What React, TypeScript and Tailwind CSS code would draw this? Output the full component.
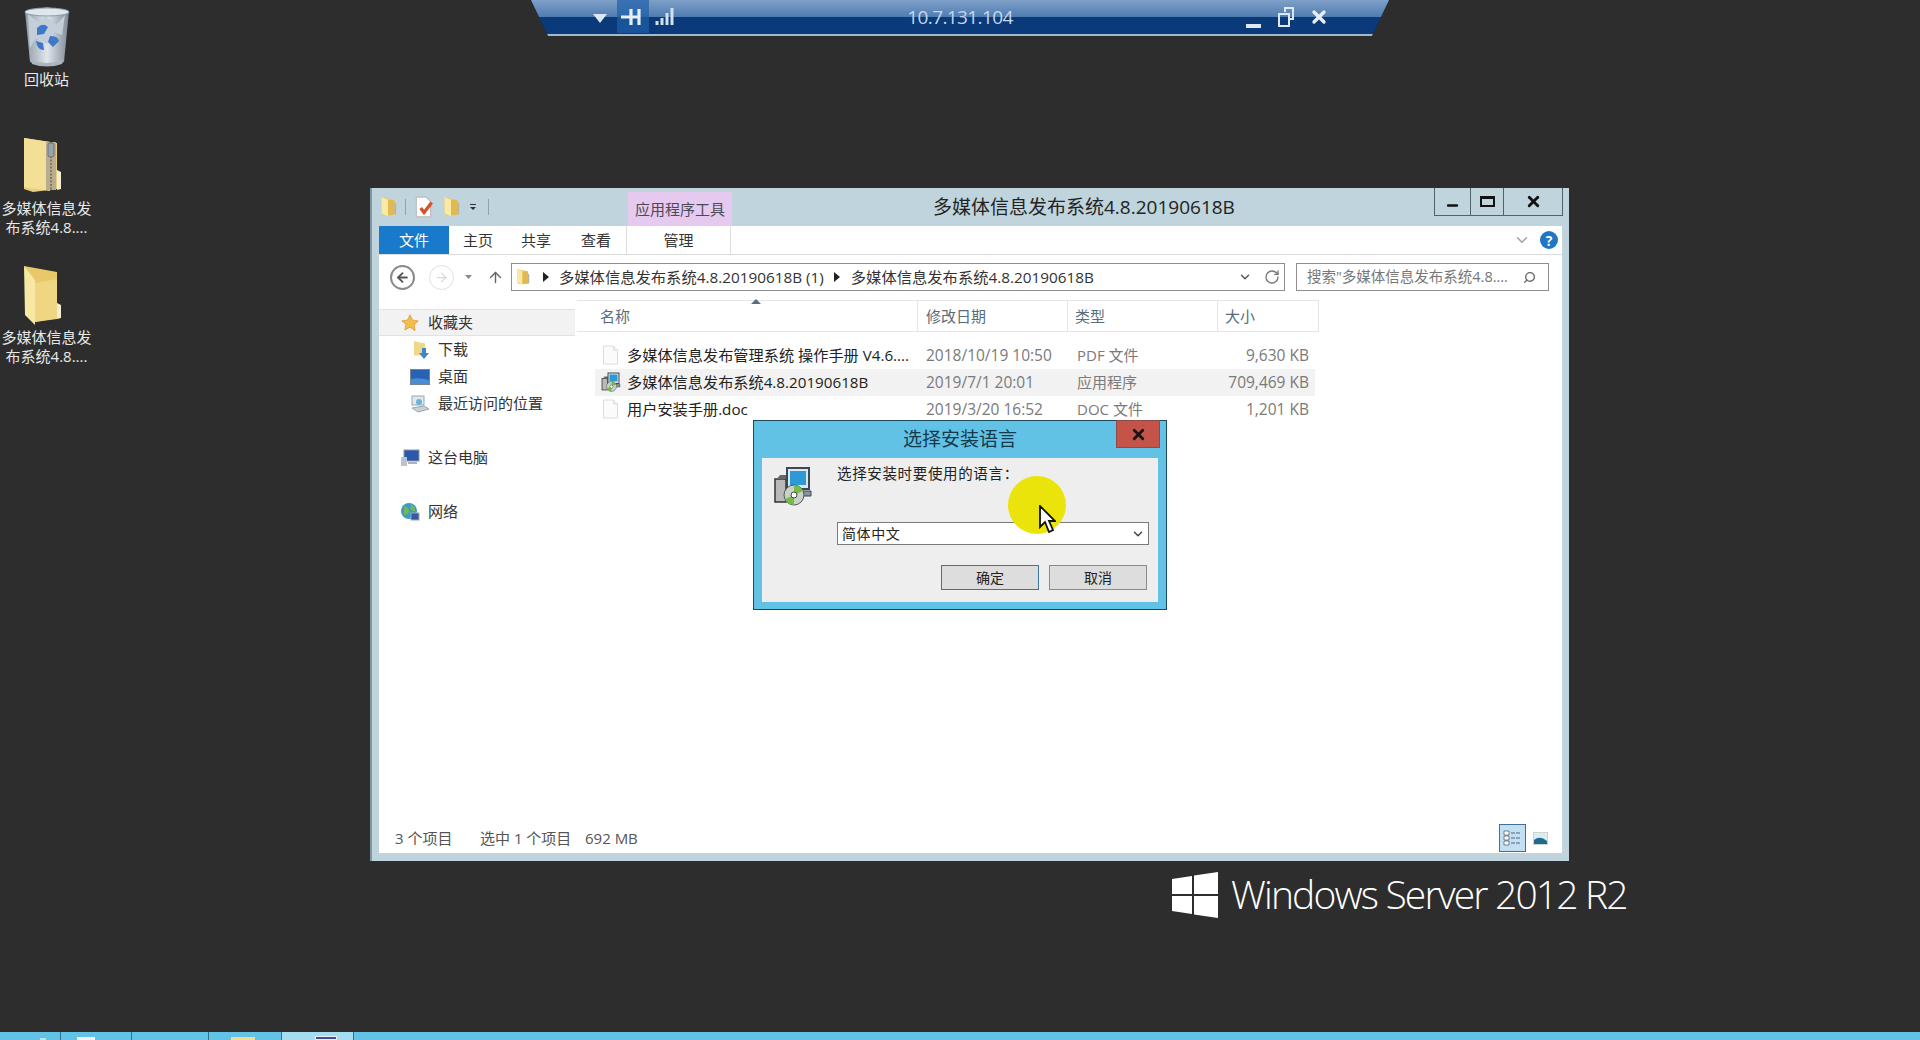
import React from "react";
import { ChevronDown, RotateCw, Search, ArrowLeft, ArrowRight, ArrowUp, X, Minus } from "lucide-react";

const cjk = { fontFamily: '"Open Sans", "Noto Sans CJK SC", sans-serif' };

const files = [
  { name: "多媒体信息发布管理系统 操作手册 V4.6....", date: "2018/10/19 10:50", type: "PDF 文件", size: "9,630 KB", kind: "doc" },
  { name: "多媒体信息发布系统4.8.20190618B", date: "2019/7/1 20:01", type: "应用程序", size: "709,469 KB", kind: "setup", selected: true },
  { name: "用户安装手册.doc", date: "2019/3/20 16:52", type: "DOC 文件", size: "1,201 KB", kind: "doc" },
];

function FolderSmall({ size = 18 }: { size?: number }) {
  return (
    <svg width={size} height={size * 1.2} viewBox="0 0 16 20">
      <path d="M2 1l6 1.5 6 1v14L4 18 2 16z" fill="#eac65f" />
      <path d="M2 1l6 2.5V19L2 16z" fill="#f8e9a5" />
      <path d="M8 4h6v13l-6 1z" fill="#e2b94e" />
      <path d="M14 6l1.5 1v10l-1.5.5z" fill="#b9b39a" />
    </svg>
  );
}

function DocIcon() {
  return (
    <svg width="17" height="20" viewBox="0 0 17 20">
      <path d="M1.5 1h10l4 4v14h-14z" fill="#fbfbfb" stroke="#dcdcdc" />
      <path d="M11.5 1v4h4" fill="#efefef" stroke="#dcdcdc" />
    </svg>
  );
}

function SetupIcon({ size = 20 }: { size?: number }) {
  return (
    <svg width={size} height={size} viewBox="0 0 40 40">
      <rect x="2" y="13" width="11" height="23" fill="#b9b9b9" stroke="#333" strokeWidth="1.5" />
      <path d="M4 13l3-4h8l-2 4z" fill="#666" />
      <rect x="14" y="2" width="22" height="21" fill="#dfe6ec" stroke="#39485a" strokeWidth="2" />
      <rect x="17" y="5" width="16" height="14" fill="#2d9ad6" />
      <path d="M14 25h24v5H24z" fill="#8a949c" stroke="#39485a" />
      <circle cx="21" cy="29" r="10" fill="#c6d3c6" stroke="#555" />
      <path d="M21 19a10 10 0 0 1 9 6l-9 4zM21 39a10 10 0 0 1-9-6l9-4z" fill="#79b84a" />
      <circle cx="21" cy="29" r="3" fill="#fff" stroke="#444" />
    </svg>
  );
}

function DesktopItem({ top, lines, children }: { top: number; lines: string[]; children: React.ReactNode }) {
  return (
    <div className="absolute left-0 w-[93px] flex flex-col items-center text-[15px] leading-[19px] text-[#e8e8e8]" style={{ top, ...cjk }}>
      {children}
      {lines.map((l) => (
        <span key={l} className="whitespace-nowrap">{l}</span>
      ))}
    </div>
  );
}

function RecycleBin() {
  return (
    <svg width="50" height="62" viewBox="0 0 50 62">
      <defs>
        <linearGradient id="bin" x1="0" x2="1">
          <stop offset="0" stopColor="#8f9aa5" />
          <stop offset="0.5" stopColor="#dfe6ee" />
          <stop offset="1" stopColor="#7e8894" />
        </linearGradient>
      </defs>
      <path d="M3 5q22-7 44 0l-5 51q-17 6-34 0z" fill="url(#bin)" />
      <path d="M6 8l10 8 8-6 10 9 9-10-3 20-9-3-6 12-11-6-6 10z" fill="#c3ced9" />
      <ellipse cx="25" cy="6" rx="22" ry="4" fill="#dfe6ec" stroke="#8f99a3" />
      <path d="M15 22q6-6 11-1l-4 7-7 1zM28 30q8 0 9 5l-6 6-5-5zM14 35l7 2 1 7q-7 0-8-9z" fill="#3f78c9" />
      <path d="M9 54q16 6 32 0l-1 4q-15 5-30 0z" fill="#aeb4ba" />
    </svg>
  );
}

function ZipFolder() {
  return (
    <svg width="42" height="56" viewBox="0 0 42 56">
      <path d="M1 1l33 5v46L10 55 1 52z" fill="#e9cf7d" />
      <path d="M1 1l26 4v49L1 50z" fill="#f3df96" />
      <rect x="23" y="5" width="10" height="48" fill="#b9ad90" />
      <path d="M28 5v48" stroke="#80776a" strokeWidth="2" strokeDasharray="2 1.5" />
      <rect x="25" y="6" width="6" height="14" rx="2" fill="#9aa3aa" stroke="#6c7379" />
      <path d="M34 33l4 2v17l-4 1z" fill="#f4eed0" />
    </svg>
  );
}

function OpenFolder() {
  return (
    <svg width="42" height="62" viewBox="0 0 42 62">
      <path d="M1 1l33 6v46L12 57z" fill="#e8c869" />
      <path d="M12 18l22-4v40l-22 3z" fill="#efd683" />
      <path d="M1 1l11 14v45L2 50z" fill="#f7e8a3" />
      <path d="M34 38l4 2v13l-4 1z" fill="#f4eed0" />
    </svg>
  );
}

function TopBar() {
  return (
    <div
      className="absolute top-0 left-[531px] w-[858px] h-[36px] [clip-path:polygon(0_0,100%_0,98%_100%,2%_100%)] flex flex-col"
      style={{ background: "#0a3a7a" }}
    >
      <div className="h-[17px] bg-gradient-to-b from-[#7fa0c9] to-[#4f7cb0]" />
      <div className="flex-1 bg-[#0a3a7a] border-b-2 border-[#a4b8cf]" />
      <div className="absolute left-[86px] top-0 w-[32px] h-[33px] bg-[#1d5fa8]/70" />
      <svg className="absolute left-[62px] top-[14px]" width="14" height="9" viewBox="0 0 14 9"><path d="M0 0h14L7 9z" fill="#dfe8f2" /></svg>
      <svg className="absolute left-[90px] top-[7px]" width="23" height="20" viewBox="0 0 23 20"><path d="M0 10h9M10 2v16M18 2v16M10 10h8" stroke="#e6eef6" strokeWidth="3.2" /></svg>
      <svg className="absolute left-[124px] top-[7px]" width="19" height="19" viewBox="0 0 19 19"><path d="M2 18v-4M7 18v-7M12 18V6M17 18V1" stroke="#d4e0ec" strokeWidth="3" /></svg>
      <span className="absolute left-0 right-0 top-[4px] text-center text-[19px] leading-[26px] tracking-[-0.6px] text-[#c2d7ee]" style={{ fontFamily: '"Open Sans", sans-serif' }}>10.7.131.104</span>
      <div className="absolute left-[715px] top-[24px] w-[15px] h-[4px] bg-[#dfe8f2]" />
      <svg className="absolute left-[746px] top-[6px]" width="18" height="22" viewBox="0 0 18 22"><path d="M8 6V2h8v11h-3" fill="none" stroke="#dfe8f2" strokeWidth="2" /><rect x="2" y="8" width="10" height="12" fill="none" stroke="#dfe8f2" strokeWidth="2" /></svg>
      <X className="absolute left-[778px] top-[7px] text-[#e8eef5]" size={20} strokeWidth={4} />
    </div>
  );
}

function SideRow({ icon, label, pad, active }: { icon: React.ReactNode; label: string; pad: string; active?: boolean }) {
  return (
    <div className={`h-[27px] flex items-center gap-[8px] ${pad} ${active ? "bg-[#f2f2f2] border-y border-[#e2e2e2]" : ""}`}>
      <span className="w-[20px] flex justify-center">{icon}</span>
      <span className="text-[15px] text-[#333]">{label}</span>
    </div>
  );
}

function ExplorerWindow() {
  return (
    <div className="absolute left-[370px] top-[188px] w-[1199px] h-[673px] bg-[#bfd4dc] border-l-2 border-[#7f969f] pl-[7px] pr-[7px] flex flex-col text-[#333]" style={cjk}>
      {/* Title row */}
      <div className="h-[38px] relative flex shrink-0">
        <div className="flex items-center gap-[8px] h-[38px]">
          <FolderSmall />
          <span className="w-px h-[16px] bg-[#8fa3ab]" />
          <svg width="20" height="22" viewBox="0 0 18 20"><path d="M2 1h9l4 4v14H2z" fill="#fff" stroke="#bbb" /><path d="M6 11l3 4 7-9" fill="none" stroke="#d2532c" strokeWidth="3" /></svg>
          <FolderSmall />
          <svg className="ml-[1px]" width="8" height="8" viewBox="0 0 8 8"><path d="M1 1h6v1H1zM1 4h6L4 7z" fill="#333" /></svg>
          <span className="ml-[3px] w-px h-[16px] bg-[#8fa3ab]" />
        </div>
        <div className="ml-[139px] mt-[4px] w-[104px] h-[34px] bg-[#e6c9ef] flex items-center justify-center text-[15px] text-[#4a4a55]">应用程序工具</div>
        <div className="absolute left-[554px] top-0 w-[400px] h-[38px] pr-[110px] text-center leading-[38px] text-[19px] text-[#222] whitespace-nowrap">多媒体信息发布系统4.8.20190618B</div>
        <div className="absolute right-[-1px] top-0 h-[28px] flex border border-t-0 border-[#4f636b]">
          <div className="w-[36px] flex items-center justify-center border-r border-[#4f636b]"><Minus size={15} strokeWidth={4} className="mt-[8px] text-[#111]" /></div>
          <div className="w-[33px] flex items-center justify-center border-r border-[#4f636b]"><span className="w-[15px] h-[11px] border-2 border-t-[3px] border-[#111]" /></div>
          <div className="w-[58px] flex items-center justify-center"><X size={17} strokeWidth={4} className="text-[#111]" /></div>
        </div>
      </div>

      {/* Ribbon tabs */}
      <div className="h-[29px] shrink-0 bg-white border-b border-[#dcdcdc] flex items-stretch text-[15px] relative">
        <div className="w-[70px] bg-[#1979ca] text-white flex items-center justify-center">文件</div>
        <div className="w-[58px] flex items-center justify-center">主页</div>
        <div className="w-[58px] flex items-center justify-center">共享</div>
        <div className="w-[62px] flex items-center justify-center">查看</div>
        <div className="ml-[-1px] w-[105px] flex items-center justify-center border-x border-[#dcdcdc]">管理</div>
        <div className="ml-auto flex items-center gap-[9px] pr-[4px]">
          <ChevronDown size={18} className="text-[#a0a0a0]" />
          <div className="w-[18px] h-[18px] rounded-full bg-[#1f76c4] text-white text-[14px] font-bold flex items-center justify-center">?</div>
        </div>
      </div>

      {/* Address row */}
      <div className="h-[36px] shrink-0 bg-white flex items-start pt-[8px]">
        <div className="w-[132px] h-[28px] flex items-center pl-[11px]">
          <div className="w-[25px] h-[25px] rounded-full border-2 border-[#8a8a8a] flex items-center justify-center"><ArrowLeft size={15} strokeWidth={3} className="text-[#555]" /></div>
          <div className="ml-[14px] w-[25px] h-[25px] rounded-full border border-[#e0e0e0] flex items-center justify-center"><ArrowRight size={15} className="text-[#d8d8d8]" /></div>
          <svg className="ml-[11px]" width="7" height="4" viewBox="0 0 7 4"><path d="M0 0h7L3.5 4z" fill="#8a8a8a" /></svg>
          <ArrowUp size={17} className="ml-[15px] text-[#666]" />
        </div>
        <div className="w-[774px] h-[28px] border border-[#8e8e8e] flex items-center text-[15.3px] text-[#333] whitespace-nowrap">
          <span className="ml-[3px] w-[17px]"><FolderSmall size={15} /></span>
          <svg className="ml-[11px] mr-[10px]" width="6" height="10" viewBox="0 0 6 10"><path d="M0 0l6 5-6 5z" fill="#222" /></svg>
          <span>多媒体信息发布系统4.8.20190618B (1)</span>
          <svg className="ml-[10px] mr-[11px]" width="6" height="10" viewBox="0 0 6 10"><path d="M0 0l6 5-6 5z" fill="#222" /></svg>
          <span>多媒体信息发布系统4.8.20190618B</span>
          <ChevronDown size={14} strokeWidth={2.5} className="ml-auto text-[#555]" />
          <RotateCw size={16} className="ml-[12px] mr-[4px] text-[#777]" />
        </div>
        <div className="ml-[11px] w-[253px] h-[28px] border border-[#8e8e8e] flex items-center pl-[10px] pr-[12px] text-[14.5px] text-[#777] whitespace-nowrap">
          <span>搜索"多媒体信息发布系统4.8....</span>
          <Search size={13} strokeWidth={2.5} className="ml-auto -scale-x-100 text-[#666]" />
        </div>
      </div>

      {/* Main */}
      <div className="flex-1 min-h-0 bg-white flex mb-[8px]">
        <div className="w-[196px] shrink-0 pt-[18px]">
          <SideRow active pad="pl-[21px]" label="收藏夹" icon={<svg width="18" height="18" viewBox="0 0 24 24"><path d="M12 1l3.4 7.2 7.6 1-5.6 5.3 1.5 7.8L12 17.5l-6.9 3.8 1.5-7.8L1 9.2l7.6-1z" fill="#f5bd4b" stroke="#d99a2b" /></svg>} />
          <SideRow pad="pl-[31px]" label="下载" icon={<svg width="17" height="20" viewBox="0 0 17 20"><path d="M2 1l6 1.5 5 1v12H2z" fill="#efd887" /><path d="M10 8h4v5h3l-5 6-5-6h3z" fill="#3f86c9" /></svg>} />
          <SideRow pad="pl-[31px]" label="桌面" icon={<svg width="20" height="16" viewBox="0 0 20 16"><rect width="20" height="16" fill="#78848f" /><rect x="1" y="1" width="18" height="14" fill="#2a62b3" /><path d="M1 10q9-2 18 1v4H1z" fill="#4a8ad6" /></svg>} />
          <SideRow pad="pl-[31px]" label="最近访问的位置" icon={<svg width="20" height="18" viewBox="0 0 20 18"><rect x="2" y="1" width="12" height="9" fill="#dfe8ec" stroke="#9aa7ad" /><path d="M2 13l12-2 5 3-11 3z" fill="#c8d2d6" stroke="#9aa7ad" /><circle cx="9" cy="7" r="3" fill="#6cb2d9" /></svg>} />
          <div className="h-[27px]" />
          <SideRow pad="pl-[21px]" label="这台电脑" icon={<svg width="20" height="18" viewBox="0 0 20 18"><rect x="4" y="1" width="15" height="11" fill="#2b57ad" stroke="#8a97a5" /><path d="M1 8h6v9H1z" fill="#b9c4cc" /><path d="M8 13h9v2H8z" fill="#aab3ba" /></svg>} />
          <div className="h-[27px]" />
          <SideRow pad="pl-[21px]" label="网络" icon={<svg width="20" height="20" viewBox="0 0 20 20"><circle cx="9" cy="9" r="8" fill="#3c9ad0" /><path d="M4 4q5 1 5 5t-5 4zM11 2q5 3 4 8l-5-3z" fill="#6dbb56" /><rect x="11" y="11" width="8" height="7" fill="#375a9c" stroke="#9aa7b5" /></svg>} />
        </div>

        <div className="flex-1 min-w-0 relative flex flex-col pt-[9px] pl-[2px]">
          <svg className="absolute left-[176px] top-[8px]" width="10" height="5" viewBox="0 0 10 5"><path d="M5 0l5 5H0z" fill="#5c6c78" /></svg>
          <div className="w-[742px] h-[32px] shrink-0 border-t border-b border-[#e5e5e5] grid grid-cols-[341px_150px_150px_101px] text-[15px] text-[#5b6b78]">
            <div className="pl-[23px] border-r border-[#e5e5e5] flex items-center">名称</div>
            <div className="pl-[8px] border-r border-[#e5e5e5] flex items-center">修改日期</div>
            <div className="pl-[7px] border-r border-[#e5e5e5] flex items-center">类型</div>
            <div className="pl-[7px] border-r border-[#e5e5e5] flex items-center">大小</div>
          </div>
          <div className="pt-[10px] pl-[18px] w-[738px]">
            {files.map((f) => (
              <div
                key={f.name}
                className={`h-[27px] grid grid-cols-[324px_150px_150px_95px] items-center text-[15.2px] whitespace-nowrap border border-transparent ${f.selected ? "bg-[#f2f2f2] border-[#e4e4e4]" : ""}`}
              >
                <div className="flex items-center pl-[4px] gap-[6px] text-[#222]">
                  <span className="w-[21px] flex justify-center">{f.kind === "setup" ? <SetupIcon /> : <DocIcon />}</span>
                  <span>{f.name}</span>
                </div>
                <div className="pl-[6px] text-[#7a7a7a] text-[15.5px]">{f.date}</div>
                <div className="pl-[7px] text-[#7a7a7a] text-[15px]">{f.type}</div>
                <div className="text-right pr-[6px] text-[#7a7a7a] text-[15.5px]">{f.size}</div>
              </div>
            ))}
          </div>
          <div className="absolute right-[13px] bottom-[1px] flex items-center gap-[7px]">
            <div className="w-[27px] h-[28px] border border-[#3f6f9a] bg-[#c3e0f3] flex items-center justify-center">
              <svg width="19" height="16" viewBox="0 0 19 16"><path d="M1 1h5v4H1zM1 6h5v4H1zM1 11h5v4H1z" fill="#fff" stroke="#567" strokeWidth="0.8" /><path d="M8 3h10M8 8h10M8 13h10" stroke="#567" strokeWidth="1.2" strokeDasharray="4 1" /></svg>
            </div>
            <svg className="mr-[1px]" width="15" height="13" viewBox="0 0 15 13"><rect width="15" height="13" fill="#dcecef" stroke="#bbb" /><path d="M1 8q6-5 13 1v3H1z" fill="#1f6a8f" /></svg>
          </div>
        </div>
      </div>
    </div>
  );
}

function StatusBar() {
  return (
    <div className="absolute left-[395px] top-[828px] h-[20px] flex items-center text-[15px] text-[#555] whitespace-nowrap" style={cjk}>
      <span className="w-[85px]">3 个项目</span>
      <span className="w-[105px]">选中 1 个项目</span>
      <span>692 MB</span>
    </div>
  );
}

function Dialog() {
  return (
    <div className="absolute left-[753px] top-[420px] w-[414px] h-[190px] bg-[#61c2e5] border border-[#1d4a63] pl-[8px] pr-[8px] flex flex-col" style={cjk}>
      <div className="h-[37px] shrink-0 relative text-center text-[19px] leading-[36px] text-[#16394b]">
        选择安装语言
        <div className="absolute right-[-2px] top-[-1px] w-[44px] h-[28px] bg-[#c4534a] border border-[#8f4a44] flex items-center justify-center">
          <X size={17} strokeWidth={4} className="text-[#151515]" />
        </div>
      </div>
      <div className="h-[144px] bg-[#eeeeee] relative flex">
        <div className="w-[75px] pl-[11px] pt-[8px] shrink-0"><SetupIcon size={40} /></div>
        <div className="flex-1 flex flex-col pr-[9px] text-[14px] text-[#222]">
          <div className="pt-[5px] h-[64px] text-[14.5px] tracking-[0.65px]">选择安装时要使用的语言：</div>
          <div className="h-[23px] bg-white border border-[#7a7a7a] flex items-center pl-[4px] tracking-[0.6px]">
            简体中文
            <ChevronDown size={14} strokeWidth={2.5} className="ml-auto mr-[3px] text-[#444]" />
          </div>
          <div className="mt-[20px] flex justify-end gap-[10px] pr-[2px]">
            <div className="w-[98px] h-[25px] bg-[#dddddd] border border-[#3f7398] flex items-center justify-center text-[14px]">确定</div>
            <div className="w-[98px] h-[25px] bg-[#dddddd] border border-[#8a8a8a] flex items-center justify-center text-[14px]">取消</div>
          </div>
        </div>
      </div>
    </div>
  );
}

function CursorHighlight() {
  return (
    <>
      <div className="absolute left-[1008px] top-[476px] w-[58px] h-[58px] rounded-full bg-[#eae40a]" />
      <svg className="absolute left-[1038px] top-[505px]" width="18" height="29" viewBox="0 0 18 29">
        <path d="M2 1v21l5-5 4 10 4-2-4-9h6z" fill="#fff" stroke="#111" strokeWidth="1.8" />
      </svg>
    </>
  );
}

function Taskbar() {
  return (
    <div className="absolute left-0 right-0 bottom-0 h-[8px] bg-[#62c3e6] flex overflow-hidden">
      <div className="w-[61px] h-full border-r border-[#2f6f8c] pl-[40px]"><span className="block mt-[6px] w-[6px] h-[2px] bg-[#bfe3f2]" /></div>
      <div className="w-[71px] h-full border-r border-[#2f6f8c] pl-[16px]"><span className="block mt-[5px] w-[18px] h-[3px] bg-[#eef6fa]" /></div>
      <div className="w-[77px] h-full border-r border-[#2f6f8c]" />
      <div className="w-[73px] h-full border-r border-[#2f6f8c] pl-[22px]"><span className="block mt-[5px] w-[24px] h-[3px] bg-[#f1dc95]" /></div>
      <div className="w-[72px] h-full bg-[#a5dcf0] border-r border-[#2f6f8c] pl-[33px]"><span className="block mt-[4px] w-[22px] h-[4px] bg-[#3c4f9c] border border-[#eee]" /></div>
    </div>
  );
}

function Branding() {
  return (
    <div className="absolute left-[1172px] top-[872px] flex items-center h-[46px] text-white">
      <svg width="46" height="46" viewBox="0 0 46 46">
        <path d="M0 7l20-3v18H0zM22 3.6L46 0v22H22zM0 24h20v18L0 39zM22 24h24v22l-24-3.6z" fill="#fff" />
      </svg>
      <span className="ml-[13px] -mt-[2px] text-[39px] leading-[46px] font-light tracking-[-1.85px] whitespace-nowrap" style={{ fontFamily: '"Open Sans", sans-serif' }}>
        Windows Server 2012 R2
      </span>
    </div>
  );
}

export default function App() {
  return (
    <div className="relative w-[1920px] h-[1040px] overflow-hidden bg-[#2d2d2d]">
      <DesktopItem top={6} lines={["回收站"]}>
        <div className="h-[64px]"><RecycleBin /></div>
      </DesktopItem>
      <DesktopItem top={137} lines={["多媒体信息发", "布系统4.8...."]}>
        <div className="h-[62px] -ml-[6px]"><ZipFolder /></div>
      </DesktopItem>
      <DesktopItem top={265} lines={["多媒体信息发", "布系统4.8...."]}>
        <div className="h-[63px] -ml-[6px]"><OpenFolder /></div>
      </DesktopItem>
      <TopBar />
      <ExplorerWindow />
      <StatusBar />
      <Dialog />
      <CursorHighlight />
      <Branding />
      <Taskbar />
    </div>
  );
}
